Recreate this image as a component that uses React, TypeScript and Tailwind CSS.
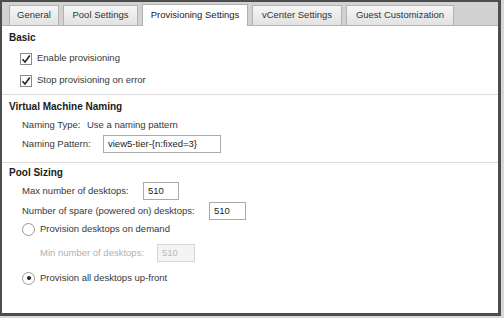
const font = { fontFamily: '"Liberation Sans", Arial, sans-serif' };

const tabs = [
  { label: 'General', w: 'w-[50px]' },
  { label: 'Pool Settings', w: 'w-[75px]' },
  { label: 'Provisioning Settings', w: 'w-[106px]', active: true },
  { label: 'vCenter Settings', w: 'w-[90px]' },
  { label: 'Guest Customization', w: 'w-[108px]' },
];

function Check() {
  return (
    <span className="flex h-[12px] w-[12px] shrink-0 items-center justify-center border border-[#8a8a8a] bg-white">
      <svg width="10" height="10" viewBox="0 0 10 10">
        <path d="M1.5 5.2 L4 8 L8.8 1.5" fill="none" stroke="#222" strokeWidth="1.6" />
      </svg>
    </span>
  );
}

function Radio({ on }: { on?: boolean }) {
  return (
    <span className="flex h-[13px] w-[13px] shrink-0 items-center justify-center rounded-full border border-[#999] bg-white">
      {on && <span className="h-[4px] w-[4px] rounded-full bg-[#222]" />}
    </span>
  );
}

function Field({ value, w, disabled }: { value: string; w: string; disabled?: boolean }) {
  return (
    <div
      className={`flex h-[18px] shrink-0 items-center border px-[4px] ${w} ${
        disabled ? 'border-[#d6d6d6] bg-[#f4f4f4] text-[#b8b8b8]' : 'border-[#a9a9a9] bg-white text-[#222]'
      }`}
    >
      {value}
    </div>
  );
}

export default function App() {
  return (
    <div className="h-[318px] w-[504px] bg-[#d8d8d8]" style={font}>
      <div className="flex h-[316px] w-[501px] flex-col whitespace-nowrap border-b-[3px] border-l-2 border-r-[3px] border-t-2 border-[#4d4d4d] bg-white text-[9.5px] text-[#383838]">
        {/* Tab strip */}
        <div className="flex h-[24px] shrink-0 items-end gap-[4px] border-b border-[#b5b5b5] bg-[#d2d2d2] pl-[7px]">
          {tabs.map((t) => (
            <div
              key={t.label}
              className={`flex items-center justify-center border border-b-0 ${t.w} ${
                t.active
                  ? '-mb-px h-[22px] border-[#b0b0b0] bg-white text-[#222]'
                  : 'h-[20px] border-[#b3b3b3] bg-gradient-to-b from-[#f6f6f6] to-[#e2e2e2] text-[#333]'
              }`}
            >
              {t.label}
            </div>
          ))}
        </div>

        {/* Basic */}
        <div className="border-b border-[#dcdcdc] px-[7px] pb-[2px]">
          <div className="flex h-[22px] items-center text-[10px] font-bold text-[#1a1a1a]">Basic</div>
          <div className="flex h-[21px] items-center gap-[5px] pl-[11px]">
            <Check />
            <span>Enable provisioning</span>
          </div>
          <div className="flex h-[23px] items-center gap-[5px] pl-[11px]">
            <Check />
            <span>Stop provisioning on error</span>
          </div>
        </div>

        {/* Virtual Machine Naming */}
        <div className="border-b border-[#dcdcdc] px-[7px] pb-[7px]">
          <div className="flex h-[22px] items-center text-[10px] font-bold text-[#1a1a1a]">Virtual Machine Naming</div>
          <div className="flex h-[16px] items-center pl-[13px]">
            <span className="w-[65px]">Naming Type:</span>
            <span>Use a naming pattern</span>
          </div>
          <div className="flex h-[22px] items-center pl-[13px]">
            <span className="w-[81px]">Naming Pattern:</span>
            <Field value="view5-tier-{n:fixed=3}" w="w-[118px]" />
          </div>
        </div>

        {/* Pool Sizing */}
        <div className="px-[7px]">
          <div className="flex h-[19px] items-center text-[10px] font-bold text-[#1a1a1a]">Pool Sizing</div>
          <div className="flex h-[18px] items-center pl-[13px]">
            <span className="w-[121px]">Max number of desktops:</span>
            <Field value="510" w="w-[36px]" />
          </div>
          <div className="flex h-[22px] items-center pl-[13px]">
            <span className="w-[187px]">Number of spare (powered on) desktops:</span>
            <Field value="510" w="w-[37px]" />
          </div>
          <div className="flex h-[14px] items-center gap-[5px] pl-[13px]">
            <Radio />
            <span>Provision desktops on demand</span>
          </div>
          <div className="flex h-[34px] items-center pl-[31px] text-[#b0b0b0]">
            <span className="w-[117px]">Min number of desktops:</span>
            <Field value="510" w="w-[38px]" disabled />
          </div>
          <div className="flex h-[16px] items-center gap-[5px] pl-[13px]">
            <Radio on />
            <span>Provision all desktops up-front</span>
          </div>
        </div>
      </div>
    </div>
  );
}
